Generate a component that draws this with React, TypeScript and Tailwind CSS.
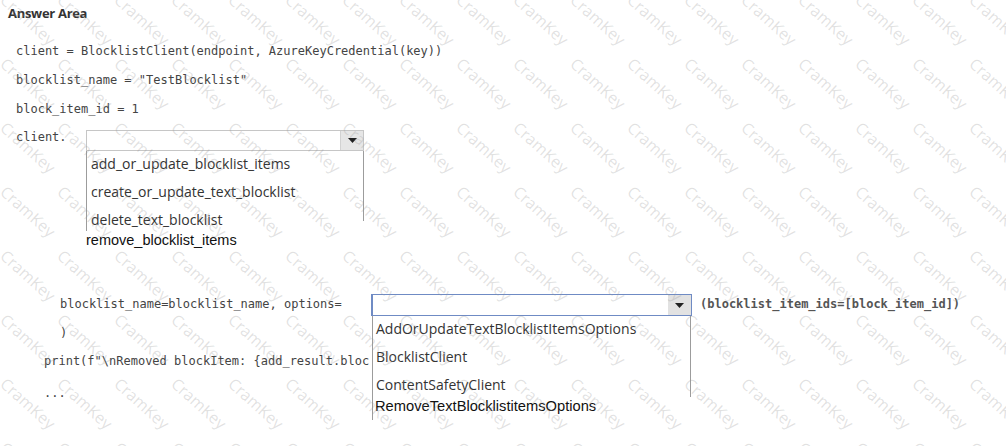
import React from 'react';

const mono = { fontFamily: '"DejaVu Sans Mono", "Liberation Mono", monospace' };
const ui = { fontFamily: '"Open Sans", "Noto Sans", sans-serif' };
const arial = { fontFamily: '"Liberation Sans", Arial, sans-serif' };

function Arrow() {
  return (
    <svg width="9" height="5" viewBox="0 0 9 5">
      <path d="M0 0 L9 0 L4.5 5 Z" fill="#222" />
    </svg>
  );
}

// watermark tiles, laid along the diagonals
const marks: { x: number; y: number }[] = [];
for (let r = 0; r < 9; r++) {
  for (let c = -3; c < 19; c++) {
    marks.push({ x: 3 + 57 * c, y: -11 + 64 * r });
  }
}

function Watermark() {
  return (
    <div className="absolute inset-0 z-10 pointer-events-none overflow-hidden">
      {marks.map((m, i) => (
        <span
          key={i}
          className="absolute text-[16px] leading-[16px] whitespace-nowrap text-[rgba(150,150,150,0.28)] origin-left rotate-[42deg]"
          style={{ ...ui, left: m.x, top: m.y }}
        >
          CramKey
        </span>
      ))}
    </div>
  );
}

const methods = ['add_or_update_blocklist_items', 'create_or_update_text_blocklist', 'delete_text_blocklist'];
const types = ['AddOrUpdateTextBlocklistItemsOptions', 'BlocklistClient', 'ContentSafetyClient'];

export default function App() {
  return (
    <div className="relative w-[1006px] h-[446px] bg-white overflow-hidden">
      <div className="pl-[8px] pt-[5px] h-[21px] text-[13px] leading-[16px] font-bold tracking-[-0.3px] text-[#333]" style={ui}>
        Answer Area
      </div>

      <div className="pl-[16px] pt-[15px] text-[12px] text-[#444]" style={mono}>
        <div className="h-[29px] flex items-center whitespace-pre">client = BlocklistClient(endpoint, AzureKeyCredential(key))</div>
        <div className="h-[29px] flex items-center whitespace-pre">blocklist_name = "TestBlocklist"</div>
        <div className="h-[29px] flex items-center whitespace-pre">block_item_id = 1</div>

        {/* client.[dropdown] */}
        <div className="h-[29px] flex items-start">
          <span className="w-[70px] leading-[29px]">client.</span>
          <div className="relative w-[278px] mt-[7px]">
            <div className="h-[21px] border border-[#c6c6c6] bg-white flex justify-end">
              <div className="w-[23px] bg-[#e6e6e6] border-l border-[#d2d2d2] flex items-center justify-center">
                <Arrow />
              </div>
            </div>
            <div className="absolute top-full left-0 w-[278px]">
              <div className="border-l border-[#9c9c9c] h-[80px] bg-white">
                <div className="border-r border-[#9c9c9c] h-[70px]">
                  {methods.map((m) => (
                    <div key={m} className="h-[28px] flex items-center pb-[3px] pl-[4px] text-[14px] text-[#333] whitespace-nowrap" style={ui}>
                      {m}
                    </div>
                  ))}
                </div>
              </div>
              <div className="leading-[18px] text-[14.5px] text-[#111] whitespace-nowrap" style={arial}>
                remove_blocklist_items
              </div>
            </div>
          </div>
        </div>

        {/* options=[dropdown] */}
        <div className="mt-[138px] h-[29px] flex items-start">
          <span className="pl-[44px] w-[355px] leading-[29px] whitespace-pre">blocklist_name=blocklist_name, options=</span>
          <div className="relative z-[1] w-[321px] mt-[4px]">
            <div className="h-[22px] border border-l-2 border-[#6f8bc4] bg-white flex justify-end">
              <div className="w-[23px] bg-[#e2e2e2] flex items-center justify-center">
                <Arrow />
              </div>
            </div>
            <div className="absolute top-full left-[1px] w-[319px]">
              <div className="border-l border-[#9c9c9c] h-[104px] bg-white">
                <div className="border-r border-[#9c9c9c] h-[81px]">
                  {types.map((t) => (
                    <div key={t} className="h-[28px] flex items-center pb-[4px] pl-[3px] text-[14px] text-[#333] whitespace-nowrap" style={ui}>
                      {t}
                    </div>
                  ))}
                </div>
                <div className="pl-[2px] leading-[18px] text-[14.7px] text-[#111] whitespace-nowrap" style={arial}>
                  RemoveTextBlocklistitemsOptions
                </div>
              </div>
            </div>
          </div>
          <span className="ml-[8px] leading-[29px] font-bold text-[#555] whitespace-pre">(blocklist_item_ids=[block_item_id])</span>
        </div>
        <div className="h-[28px] flex items-center pl-[44px]">)</div>
        <div className="h-[28px] flex items-center pl-[28px] whitespace-pre">print(f"\nRemoved blockItem: {'{'}add_result.bloc</div>
        <div className="mt-[4px] h-[28px] flex items-center pl-[28px]">...</div>
      </div>

      <Watermark />
    </div>
  );
}
